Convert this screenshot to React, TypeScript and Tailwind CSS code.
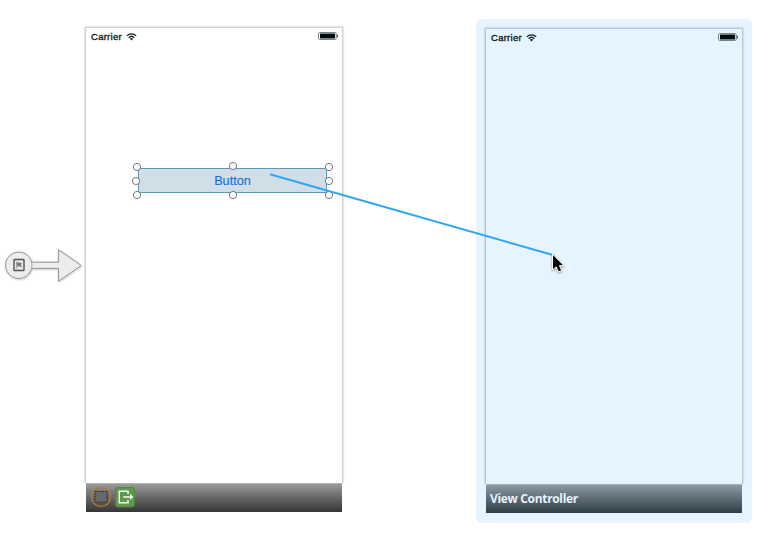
function StatusBar() {
  return (
    <div className="flex h-5 items-start justify-between pr-[4px] pl-[5px]">
      <div className="flex items-start text-[#111c22]">
        <span className="mt-[3px] font-['Liberation_Sans',sans-serif] text-[9.5px] leading-[12px] tracking-[0.27px] [-webkit-text-stroke:0.35px_currentColor]">
          Carrier
        </span>
        <svg className="mt-[5px] ml-[4.5px]" width="11" height="8" viewBox="0 0 11 8" fill="none" stroke="currentColor">
          <path d="M0.8 2.9C3.4 0.2 7.6 0.2 10.2 2.9" strokeWidth="1.3" />
          <path d="M2.7 4.7C4.3 3.1 6.7 3.1 8.3 4.7" strokeWidth="1.3" />
          <path d="M3.9 5.7Q5.5 4.4 7.1 5.7L5.5 7.5Z" fill="currentColor" stroke="none" />
        </svg>
      </div>
      <svg className="mt-[4px]" width="20" height="8" viewBox="0 0 20 8">
        <rect x="0.5" y="0.5" width="17.7" height="7" rx="1.3" fill="none" stroke="#77838a" />
        <rect x="2" y="1.5" width="15" height="5" rx="0.5" fill="#000b10" />
        <path d="M18.8 2.2q1.2 .4 1.2 1.8t-1.2 1.8z" fill="#3b464c" />
      </svg>
    </div>
  );
}

function EntryArrow() {
  return (
    <svg className="mt-[245px] shrink-0" width="85" height="40" viewBox="0 245 85 40">
      <defs>
        <filter id="soft" x="-10%" y="-10%" width="130%" height="140%">
          <feDropShadow dx="0.5" dy="0.6" stdDeviation="0.8" floodOpacity="0.25" />
        </filter>
      </defs>
      <path
        filter="url(#soft)"
        d="M31.6 262.2H58.6V249.8L81.2 265.5L58.6 281.2V268.4H31.6A13.2 13.2 0 1 1 31.6 262.2Z"
        fill="#ededed"
        stroke="#929292"
      />
      <path d="M31.6 262.2A13.2 13.2 0 0 1 31.6 268.4" fill="none" stroke="#a2a2a2" />
      <rect x="14" y="259.5" width="10" height="11" rx="0.5" fill="#e8e8e8" stroke="#555" strokeWidth="1.4" />
      <path d="M16.8 261.8V268.2" stroke="#888" />
      <path d="M17.2 262.3L22 263.3L20.8 265L22 267L17.2 266Z" fill="#777" />
    </svg>
  );
}

function DockIcons() {
  return (
    <svg className="-mt-[2px]" width="52" height="24" viewBox="0 0 52 24">
      <circle cx="15" cy="12" r="9.4" fill="none" stroke="#b17a35" strokeWidth="1.4" />
      <rect x="9" y="6.3" width="12.3" height="10.7" fill="#67686a" />
      <rect x="9" y="6.3" width="12.3" height="10.7" fill="none" stroke="#303033" strokeWidth="1.2" strokeDasharray="1.5 1" />
      <rect x="29.5" y="2.5" width="19" height="19.5" rx="2.5" fill="#5d984c" stroke="#548443" />
      <g fill="none" stroke="#f3fff0" strokeWidth="1.5">
        <path d="M42 9V6.3H33.3V17.7H42V15" />
        <path d="M37.2 12H46.5" />
      </g>
      <path d="M44 9L47.4 12L44 15Z" fill="#f3fff0" />
    </svg>
  );
}

const handles = [
  [137, 167], [233, 166], [329, 167],
  [136, 181], [329, 181],
  [137, 195], [233, 195], [329, 195],
];

export default function App() {
  return (
    <main className="relative flex h-[541px] w-[783px] items-start overflow-hidden bg-white">
      <EntryArrow />
      <section className="mt-[27px] w-[258px] shrink-0">
        <div className="h-[456px] border border-b-0 border-[#d2d2d2] bg-white shadow-[0_0_2px_#bbb]">
          <StatusBar />
        </div>
        <footer className="relative mx-px flex h-[29px] items-center border-t border-[#b4b4b4] bg-linear-to-b from-[#9a9a9a] to-[#363636]">
          <DockIcons />
        </footer>
      </section>
      <section className="mt-[19px] ml-[133px] h-[504px] w-[276px] shrink-0 rounded-[6px] bg-[#e5f4ff] px-[9px] pt-[9px]">
        <div className="h-[456px] border border-b-0 border-[#bac9d1] shadow-[0_0_2px_#a8bac5]">
          <StatusBar />
        </div>
        <footer className="relative mx-px flex h-[29px] items-center border-t border-[#a3b3bb] bg-linear-to-b from-[#8b9ba4] to-[#2f3d46] pl-[4px]">
          <span className="font-['Open_Sans',sans-serif] text-[12px] leading-[16px] font-bold tracking-[-0.33px] text-[#e6f3fb]">
            View Controller
          </span>
        </footer>
      </section>

      <div className="absolute top-[168px] left-[138px] flex h-[25px] w-[189px] items-center justify-center border border-[#5b98b6] bg-[#cfdee7]">
        <span className="font-['Liberation_Sans',sans-serif] text-[12.7px] leading-[16px] text-[#1272dc] [-webkit-text-stroke:0.15px_currentColor]">
          Button
        </span>
      </div>
      <svg className="pointer-events-none absolute inset-0" width="783" height="541" viewBox="0 0 783 541">
        {handles.map(([x, y]) => (
          <circle key={`${x}-${y}`} cx={x} cy={y} r="3.6" fill="#fff" stroke="#777" />
        ))}
        <path d="M270 174.3L553 255" stroke="#30a5f6" strokeWidth="2" />
        <g className="drop-shadow-[0_1px_1px_#0006]">
          <path d="M552.5 254V270L556.1 266.8L558.5 272L561.7 270.5L559.5 265.7H564Z" fill="#000" stroke="#fff" strokeWidth="1" />
        </g>
      </svg>
    </main>
  );
}
